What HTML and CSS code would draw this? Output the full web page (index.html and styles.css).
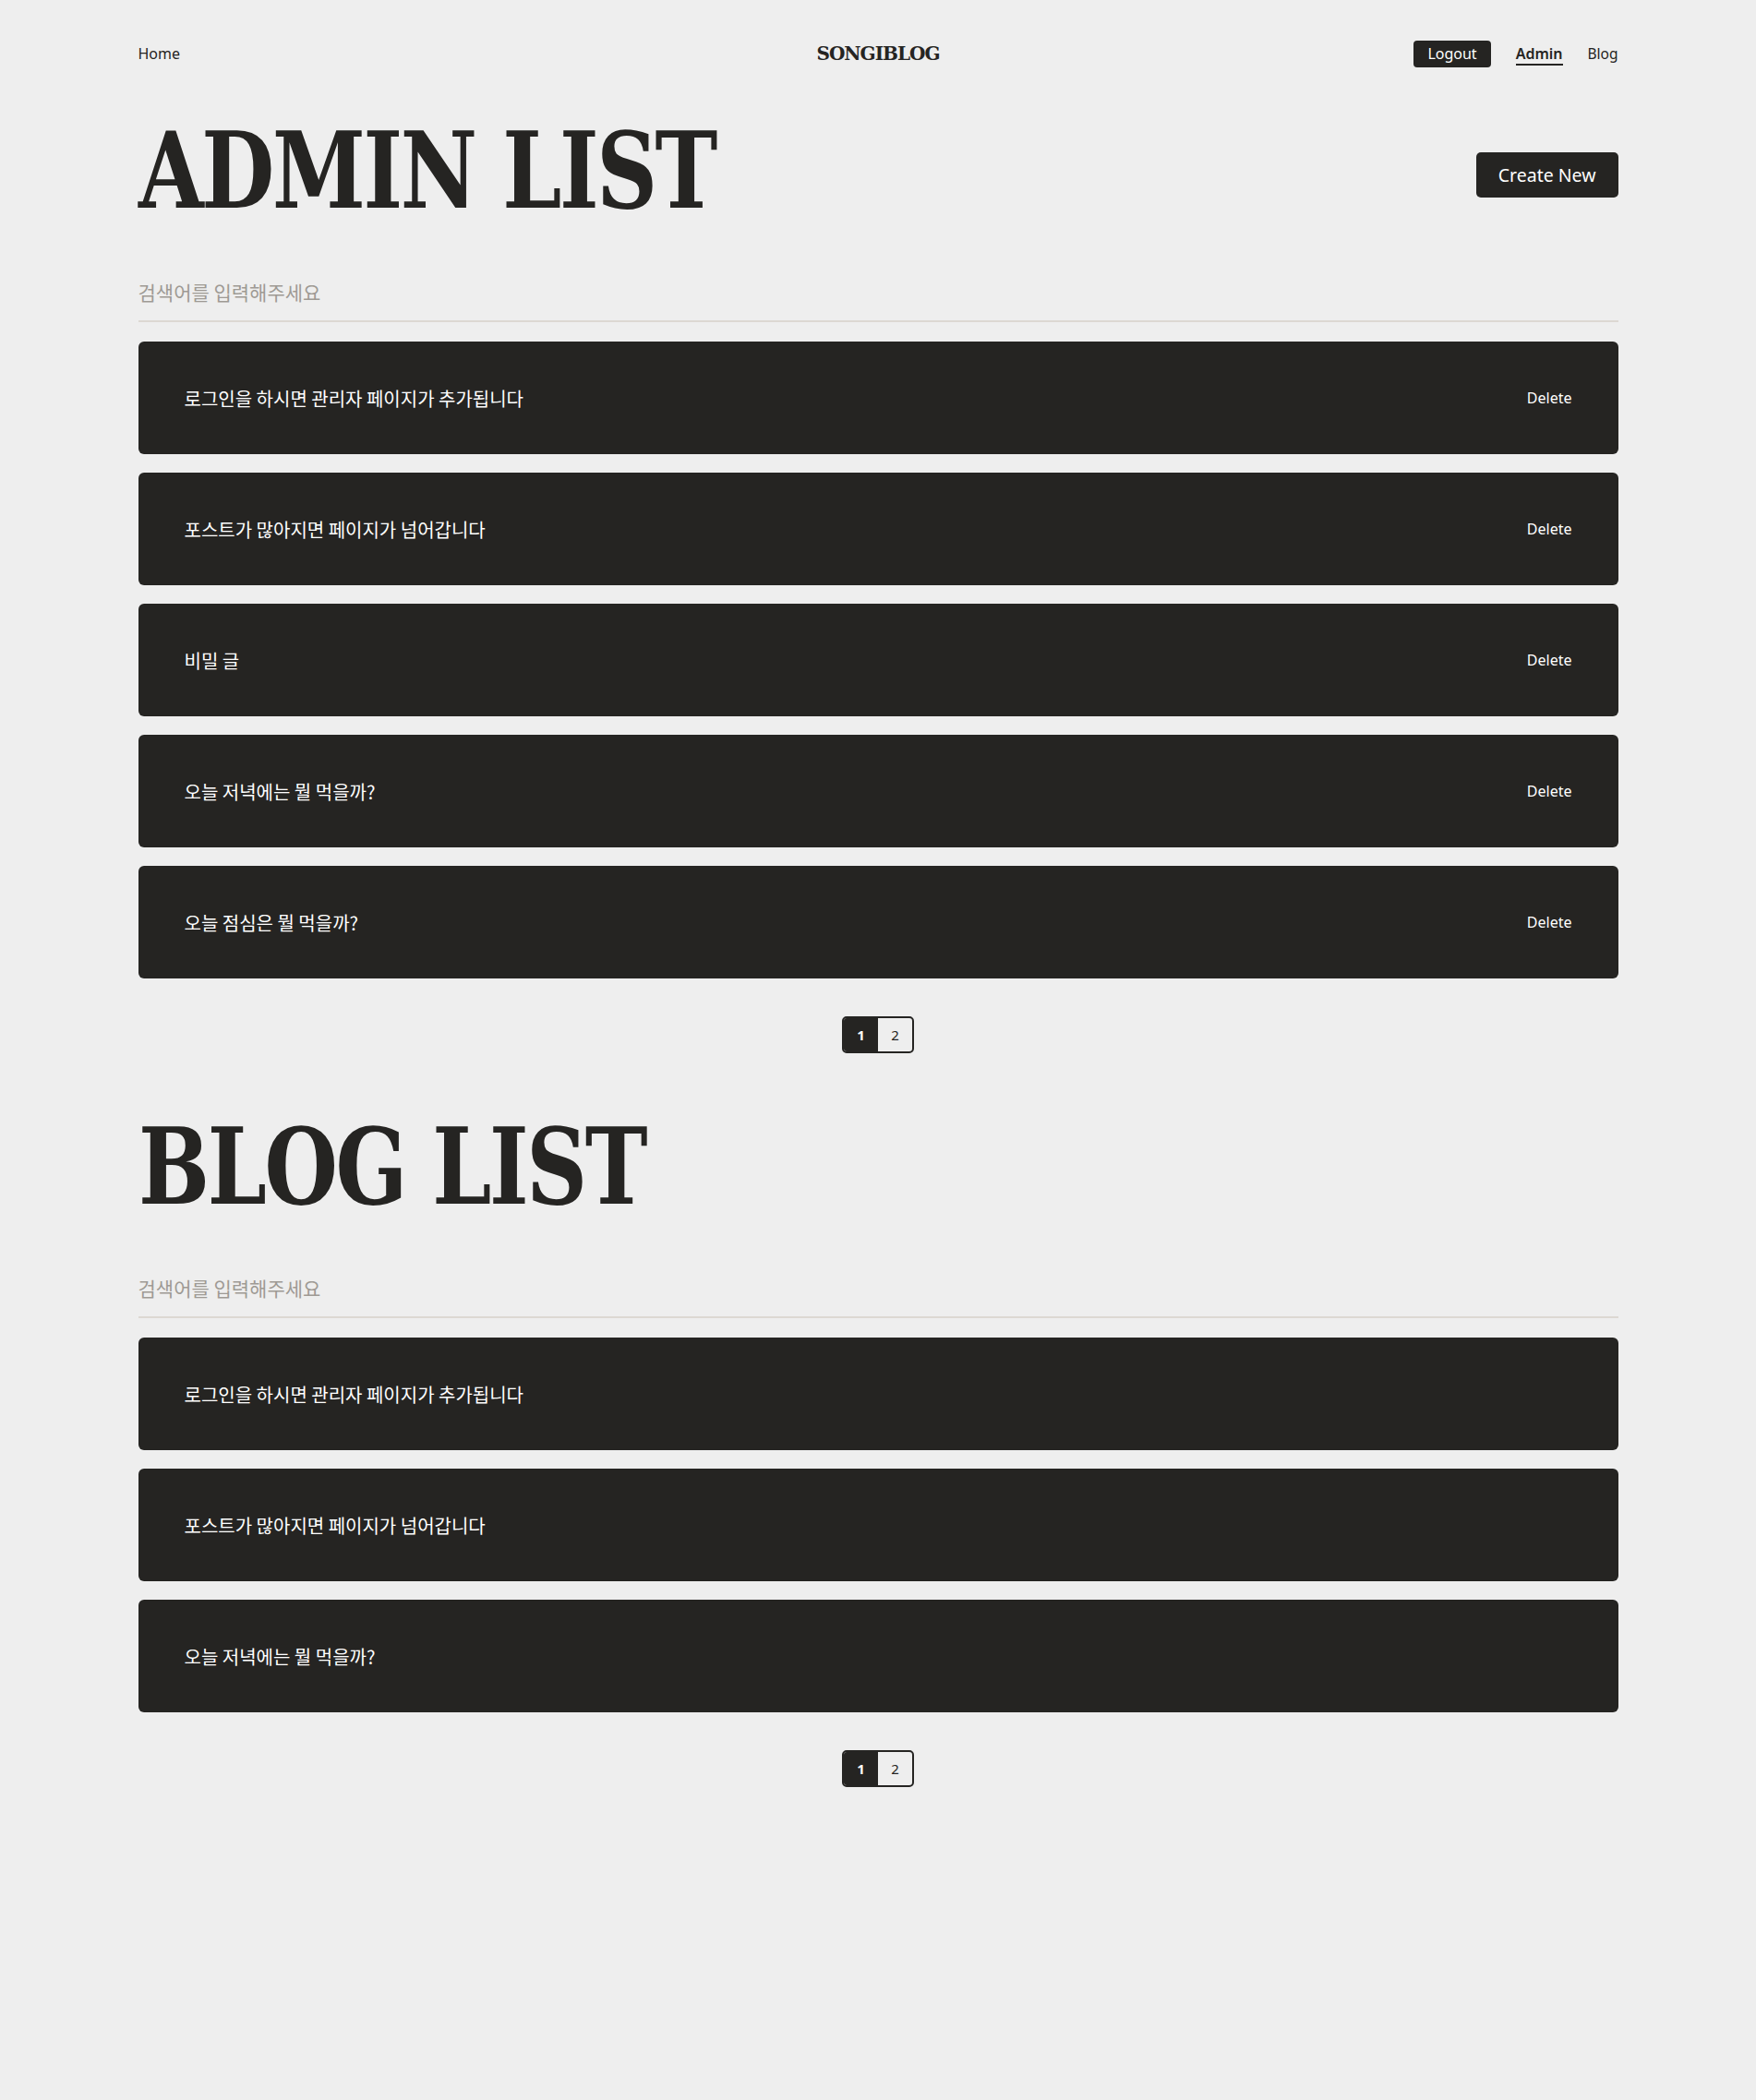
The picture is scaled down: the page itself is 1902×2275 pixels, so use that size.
FILE: index.html
```html
<!DOCTYPE html>
<html>
<head>
<title>SONGIBLOG</title>
<link rel="stylesheet" href="styles.css">
</head>
<body>

<div class="page">
  <header class="topbar">
    <nav class="nav-left">
      <a href="#" class="nav-link">Home</a>
    </nav>
    <a href="#" class="logo">SONGIBLOG</a>
    <nav class="nav-right">
      <button class="logout-btn">Logout</button>
      <a href="#" class="nav-link active">Admin</a>
      <a href="#" class="nav-link">Blog</a>
    </nav>
  </header>

  <section class="list-section">
    <div class="section-head">
      <h1 class="section-title"><span>ADMIN LIST</span></h1>
      <button class="create-btn">Create New</button>
    </div>
    <div class="search">
      <input type="text" placeholder="검색어를 입력해주세요">
    </div>
    <ul class="post-list">
      <li class="post-item"><span class="post-title">로그인을 하시면 관리자 페이지가 추가됩니다</span><button class="delete-btn">Delete</button></li>
      <li class="post-item"><span class="post-title">포스트가 많아지면 페이지가 넘어갑니다</span><button class="delete-btn">Delete</button></li>
      <li class="post-item"><span class="post-title">비밀 글</span><button class="delete-btn">Delete</button></li>
      <li class="post-item"><span class="post-title">오늘 저녁에는 뭘 먹을까?</span><button class="delete-btn">Delete</button></li>
      <li class="post-item"><span class="post-title">오늘 점심은 뭘 먹을까?</span><button class="delete-btn">Delete</button></li>
    </ul>
    <div class="pagination">
      <button class="page-btn current">1</button>
      <button class="page-btn">2</button>
    </div>
  </section>

  <section class="list-section blog">
    <div class="section-head">
      <h1 class="section-title"><span>BLOG LIST</span></h1>
    </div>
    <div class="search">
      <input type="text" placeholder="검색어를 입력해주세요">
    </div>
    <ul class="post-list">
      <li class="post-item"><span class="post-title">로그인을 하시면 관리자 페이지가 추가됩니다</span></li>
      <li class="post-item"><span class="post-title">포스트가 많아지면 페이지가 넘어갑니다</span></li>
      <li class="post-item"><span class="post-title">오늘 저녁에는 뭘 먹을까?</span></li>
    </ul>
    <div class="pagination">
      <button class="page-btn current">1</button>
      <button class="page-btn">2</button>
    </div>
  </section>
</div>

</body>
</html>
```

FILE: styles.css
```css
body {
  margin: 0;
  background-color: #eeeeee;
  color: #252422;
  font-family: "Noto Sans", "Noto Sans CJK KR", sans-serif;
}
.page {
  width: 1603px;
  margin: 0 auto;
}

/* top navigation */
.topbar {
  display: grid;
  grid-template-columns: 1fr auto 1fr;
  align-items: center;
  height: 36px;
  padding-top: 40px;
}
.nav-left {
  display: flex;
}
.nav-right {
  display: flex;
  justify-content: flex-end;
  align-items: center;
  gap: 27px;
}
.nav-link {
  color: #252422;
  text-decoration: none;
  font-size: 16px;
  line-height: 22px;
}
.nav-link.active {
  font-weight: 600;
  border-bottom: 2px solid #252422;
  margin-top: 2px;
}
.nav-right .nav-link:last-child {
  font-size: 15.5px;
}
.logo {
  color: #252422;
  text-decoration: none;
  font-family: "DejaVu Serif", serif;
  font-weight: bold;
  font-size: 20px;
  letter-spacing: -1px;
}
.logout-btn {
  height: 29px;
  padding: 0 15px;
  border: none;
  border-radius: 4px;
  background-color: #252422;
  color: #ffffff;
  font-family: inherit;
  font-size: 16px;
  cursor: pointer;
}

/* list sections */
.list-section {
  margin-top: 52px;
}
.list-section.blog {
  margin-top: 66px;
}
.section-head {
  display: flex;
  justify-content: space-between;
  align-items: flex-start;
}
.section-title {
  margin: 0;
  height: 115px;
  font-family: "DejaVu Serif", serif;
  font-weight: bold;
  font-size: 114px;
  line-height: 115px;
  letter-spacing: -3px;
}
.section-title span {
  display: inline-block;
  transform: scaleX(0.8);
  transform-origin: left center;
  white-space: nowrap;
}
.create-btn {
  margin-top: 37px;
  height: 49px;
  padding: 0 24px;
  border: none;
  border-radius: 5px;
  background-color: #252422;
  color: #ffffff;
  font-family: inherit;
  font-size: 19.5px;
  cursor: pointer;
}

.search {
  margin-top: 49px;
}
.search input {
  display: block;
  box-sizing: border-box;
  width: 100%;
  padding: 10px 0 17px;
  border: none;
  border-bottom: 2px solid #dcd8d2;
  background: transparent;
  font-family: "Noto Sans CJK KR", sans-serif;
  font-size: 21px;
  line-height: 28px;
  color: #252422;
  outline: none;
}
.search input::placeholder {
  color: #9e9a94;
}

.post-list {
  list-style: none;
  margin: 21px 0 0;
  padding: 0;
  display: flex;
  flex-direction: column;
  gap: 20px;
}
.post-item {
  display: flex;
  justify-content: space-between;
  align-items: center;
  height: 122px;
  padding: 0 50px;
  border-radius: 6px;
  background-color: #252422;
  color: #ffffff;
}
.post-title {
  font-family: "Noto Sans CJK KR", sans-serif;
  font-size: 20px;
}
.delete-btn {
  padding: 0;
  border: none;
  background: none;
  color: #ffffff;
  font-family: inherit;
  font-size: 16px;
  cursor: pointer;
}

.pagination {
  display: flex;
  width: max-content;
  margin: 41px auto 0;
  border: 2px solid #252422;
  border-radius: 5px;
  overflow: hidden;
}
.page-btn {
  width: 37px;
  height: 36px;
  padding: 0;
  border: none;
  background: transparent;
  color: #252422;
  font-family: inherit;
  font-size: 15px;
  cursor: pointer;
}
.page-btn.current {
  background-color: #252422;
  color: #ffffff;
  font-weight: bold;
}
```
